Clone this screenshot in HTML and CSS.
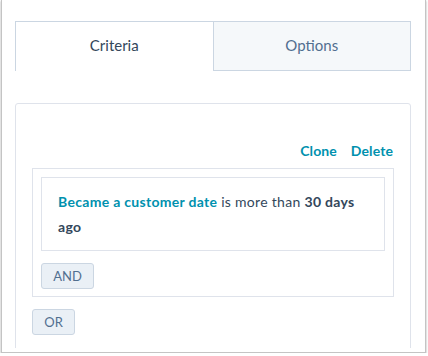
FILE: index.html
```html
<!DOCTYPE html>
<html>
<head>
<meta charset="utf-8">
<link rel="stylesheet" href="styles.css">
</head>
<body>
<div class="window">
  <div class="scroll">
    <div class="tabs">
      <div class="tab tab-active">Criteria</div>
      <div class="tab tab-inactive">Options</div>
    </div>
    <div class="panel">
      <div class="actions">
        <a class="link">Clone</a>
        <a class="link">Delete</a>
      </div>
      <div class="group">
        <div class="condition">
          <span class="prop">Became a customer date</span> is more than <strong>30 days ago</strong>
        </div>
        <button class="btn btn-and">AND</button>
      </div>
      <button class="btn btn-or">OR</button>
    </div>
  </div>
</div>
</body>
</html>
```
FILE: styles.css
```css
html, body {
  margin: 0;
  padding: 0;
  background: #ffffff;
}
body {
  font-family: Lato, "Noto Sans", sans-serif;
  color: #33475b;
}
.window {
  box-sizing: border-box;
  margin-left: 1px;
  width: 425px;
  height: 353px;
  border: 1px solid #c4c4c4;
  border-top: none;
  box-shadow: 0 1px 2px rgba(0,0,0,0.35);
  display: flex;
  flex-direction: column;
  padding: 0 0 4px 0;
  background: #fff;
}
.scroll {
  flex: 1 1 auto;
  overflow: hidden;
  padding: 21px 14px 0 13px;
}
.tabs {
  display: flex;
  height: 50px;
}
.tab {
  box-sizing: border-box;
  flex: 1 1 0;
  display: flex;
  align-items: center;
  justify-content: center;
  font-size: 15px;
  height: 50px;
  padding-bottom: 3px;
}
.tab-active {
  border-top: 1px solid #cbd6e2;
  border-left: 1px solid #cbd6e2;
  background: #fff;
  color: #33475b;
}
.tab-inactive {
  border: 1px solid #cbd6e2;
  background: #f5f8fa;
  color: #516f90;
}
.panel {
  margin-top: 32px;
  border: 1px solid #dfe3eb;
  border-radius: 3px 3px 0 0;
  padding: 37px 16px 60px 16px;
}
.actions {
  display: flex;
  justify-content: flex-end;
  gap: 14px;
  line-height: 20px;
  height: 20px;
  margin-bottom: 7px;
  padding-right: 1px;
}
.link {
  color: #0091ae;
  font-weight: 700;
  font-size: 14px;
  letter-spacing: 0.1px;
}
.group {
  border: 1px solid #dfe3eb;
  padding: 8px 8px 7px 8px;
}
.condition {
  border: 1px solid #dfe3eb;
  padding: 11px 16px 11px 16px;
  font-size: 14px;
  line-height: 25px;
  color: #33475b;
  letter-spacing: 0.3px;
}
.prop {
  color: #0091ae;
  font-weight: 700;
}
.condition strong {
  font-weight: 700;
}
.btn {
  display: block;
  box-sizing: border-box;
  height: 26px;
  border: 1px solid #cbd6e2;
  border-radius: 3px;
  background: #eaf0f6;
  color: #516f90;
  font-family: Lato, "Noto Sans", sans-serif;
  font-size: 13px;
  padding: 0;
  text-align: center;
}
.btn-and {
  width: 53px;
  margin-top: 12px;
}
.btn-or {
  width: 43px;
  margin-top: 12px;
}
```
